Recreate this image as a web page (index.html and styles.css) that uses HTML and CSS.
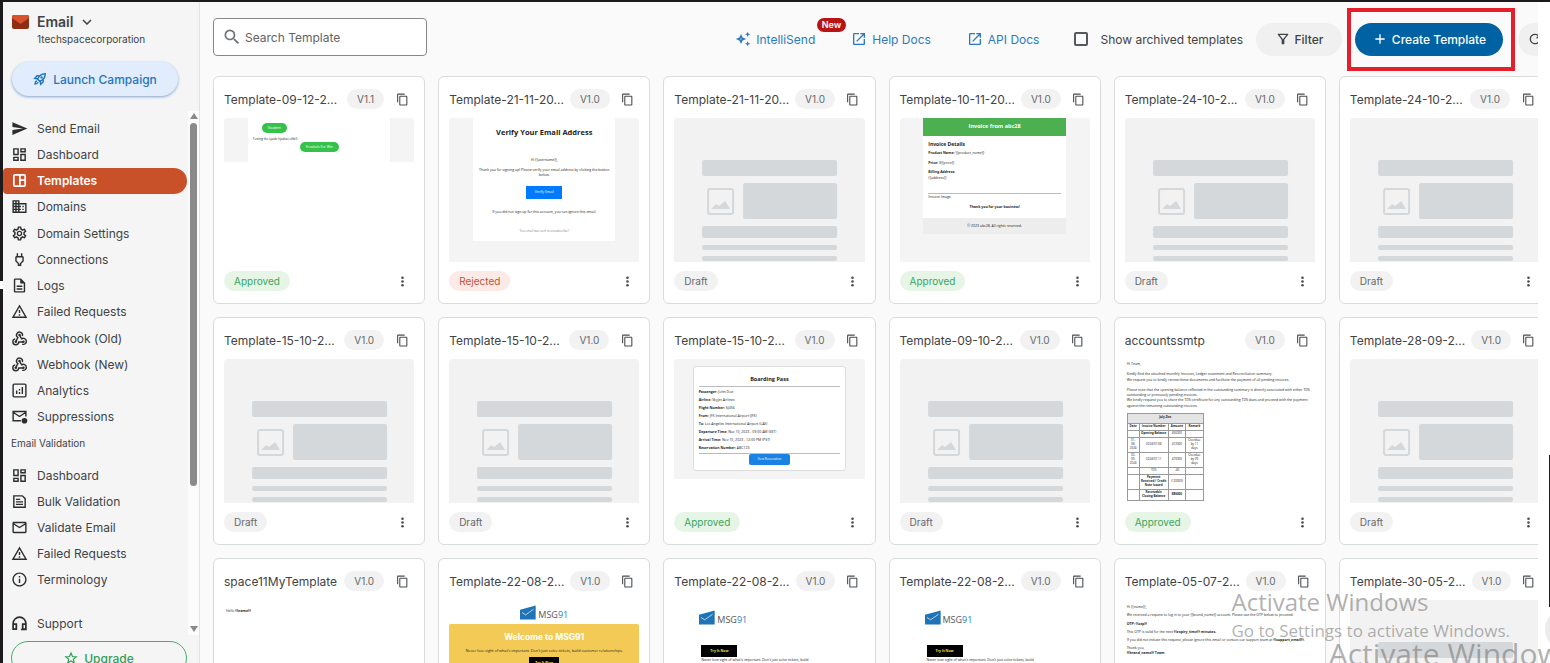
FILE: index.html
```html
<!DOCTYPE html>
<html lang="en">
<head>
    <meta charset="utf-8">
    <title>Email - Templates</title>
    <link rel="stylesheet" href="styles.css">
</head>
<body>
    <!-- icon sprite -->
    <svg class="sprite" aria-hidden="true">
        <symbol id="i-send" viewBox="0 0 24 24"><path d="M2.01 21 23 12 2.01 3 2 10l15 2-15 2z"/></symbol>
        <symbol id="i-dash" viewBox="0 0 24 24"><path d="M19 5v2h-4V5h4M9 5v6H5V5h4m10 8v6h-4v-6h4M9 17v2H5v-2h4M21 3h-8v6h8V3zM11 3H3v10h8V3zm10 8h-8v10h8V11zm-10 4H3v6h8v-6z"/></symbol>
        <symbol id="i-tpl" viewBox="0 0 24 24"><path fill="none" stroke="currentColor" stroke-width="2.4" d="M5.5 4h13A1.500 1.500 0 0 1 20 5.500v13a1.500 1.500 0 0 1-1.500 1.500h-13A1.500 1.500 0 0 1 4 18.500v-13A1.500 1.500 0 0 1 5.500 4zM12.500 4v16M12.500 11.500H20"/></symbol>
        <symbol id="i-domain" viewBox="0 0 24 24"><path d="M12 7V3H2v18h20V7H12zM6 19H4v-2h2v2zm0-4H4v-2h2v2zm0-4H4V9h2v2zm0-4H4V5h2v2zm4 12H8v-2h2v2zm0-4H8v-2h2v2zm0-4H8V9h2v2zm0-4H8V5h2v2zm10 12h-8v-2h2v-2h-2v-2h2v-2h-2V9h8v10zm-2-8h-2v2h2v-2zm0 4h-2v2h2v-2z"/></symbol>
        <symbol id="i-gear" viewBox="0 0 24 24"><path d="M19.430 12.980c.04-.32.07-.64.07-.98 0-.34-.03-.66-.07-.98l2.110-1.650c.19-.15.24-.42.12-.64l-2-3.460a.5.5 0 0 0-.61-.22l-2.490 1c-.52-.4-1.080-.73-1.690-.98l-.38-2.650A.488.488 0 0 0 14 2h-4c-.25 0-.46.18-.49.42l-.38 2.650c-.61.25-1.170.59-1.690.98l-2.490-1a.566.566 0 0 0-.18-.03c-.17 0-.34.09-.43.25l-2 3.460c-.13.22-.07.49.12.64l2.110 1.650c-.04.32-.07.65-.07.98 0 .33.03.66.07.98l-2.110 1.650c-.19.15-.24.42-.12.64l2 3.460a.5.5 0 0 0 .61.22l2.490-1c.52.4 1.080.73 1.690.98l.38 2.650c.03.24.24.42.49.42h4c.25 0 .46-.18.49-.42l.38-2.650c.61-.25 1.170-.59 1.690-.98l2.490 1c.06.02.12.03.18.03.17 0 .34-.09.43-.25l2-3.460c.12-.22.07-.49-.12-.64l-2.110-1.650zm-1.980-1.710c.04.31.05.52.05.73 0 .21-.02.43-.05.73l-.14 1.130.89.7 1.080.84-.7 1.210-1.270-.51-1.040-.42-.9.68c-.43.32-.84.56-1.250.73l-1.060.43-.16 1.130-.2 1.350h-1.400l-.19-1.350-.16-1.130-1.060-.43c-.43-.18-.83-.41-1.230-.71l-.91-.7-1.060.43-1.270.51-.7-1.210 1.080-.84.89-.7-.14-1.130c-.03-.31-.05-.54-.05-.74s.02-.43.05-.73l.14-1.130-.89-.7-1.080-.84.7-1.210 1.270.51 1.040.42.9-.68c.43-.32.84-.56 1.250-.73l1.060-.43.16-1.130.2-1.350h1.390l.19 1.350.16 1.130 1.060.43c.43.18.83.41 1.230.71l.91.7 1.060-.43 1.270-.51.7 1.210-1.070.85-.89.7.14 1.130zM12 8c-2.210 0-4 1.790-4 4s1.790 4 4 4 4-1.790 4-4-1.790-4-4-4zm0 6c-1.100 0-2-.9-2-2s.9-2 2-2 2 .9 2 2-.9 2-2 2z"/></symbol>
        <symbol id="i-plug" viewBox="0 0 24 24"><path d="M16 9v4.660l-3.500 3.510V19h-1v-1.830L8 13.650V9h8m0-6h-2v4h-4V3H8v4h-.01C6.900 6.990 6 7.890 6 8.980v5.520L9.500 18v3h5v-3l3.500-3.510V9c0-1.100-.9-2-2-2V3z"/></symbol>
        <symbol id="i-doc" viewBox="0 0 24 24"><path d="M8 16h8v2H8zm0-4h8v2H8zm6-10H6c-1.100 0-2 .9-2 2v16c0 1.100.89 2 1.990 2H18c1.100 0 2-.9 2-2V8l-6-6zm4 18H6V4h7v5h5v11z"/></symbol>
        <symbol id="i-warn" viewBox="0 0 24 24"><path d="M12 5.990 19.530 19H4.470L12 5.990M12 2 1 21h22L12 2zm1 14h-2v2h2v-2zm0-6h-2v4h2v-4z"/></symbol>
        <symbol id="i-hook" viewBox="0 0 24 24"><g fill="none" stroke="currentColor" stroke-width="2"><path d="M16 8.500a4.200 4.200 0 1 0-6.300 2.200L7 16"/><path d="M12 7.200l3 5.200a4.300 4.300 0 1 1 .8 7.600"/><path d="M6 12.500a4.200 4.200 0 1 0 5 4.500h6.500"/></g><circle cx="12" cy="7" r="1.800"/><circle cx="6.800" cy="16.500" r="1.800"/><circle cx="17.500" cy="16.500" r="1.800"/></symbol>
        <symbol id="i-chart" viewBox="0 0 24 24"><rect x="3" y="3" width="18" height="18" rx="1.500" fill="none" stroke="currentColor" stroke-width="2"/><path d="M7 12h2v5H7zM11 14h2v3h-2zM11 10h2v2h-2zM15 7h2v10h-2z"/></symbol>
        <symbol id="i-supp" viewBox="0 0 24 24"><path fill="none" stroke="currentColor" stroke-width="2" d="M21 12V5H3v13h11M3 6l9 6 9-6"/><circle cx="19" cy="18" r="4"/></symbol>
        <symbol id="i-bulk" viewBox="0 0 24 24"><path fill="none" stroke="currentColor" stroke-width="2" d="M4 4h12l4 4v12H4zM7 9h6M7 12.500h10M7 16h10"/></symbol>
        <symbol id="i-mail" viewBox="0 0 24 24"><path d="M22 6c0-1.100-.9-2-2-2H4c-1.100 0-2 .9-2 2v12c0 1.100.9 2 2 2h16c1.100 0 2-.9 2-2V6zm-2 0-8 5-8-5h16zm0 12H4V8l8 5 8-5v10z"/></symbol>
        <symbol id="i-info" viewBox="0 0 24 24"><path d="M11 7h2v2h-2zm0 4h2v6h-2zm1-9C6.480 2 2 6.480 2 12s4.480 10 10 10 10-4.480 10-10S17.520 2 12 2zm0 18c-4.410 0-8-3.590-8-8s3.590-8 8-8 8 3.590 8 8-3.590 8-8 8z"/></symbol>
        <symbol id="i-head" viewBox="0 0 24 24"><path fill="none" stroke="currentColor" stroke-width="2.400" d="M3 14v-2a9 9 0 0 1 18 0v8.500h-7M7.500 13H3v7h4.500zM21 13h-4.500v7H21"/></symbol>
        <symbol id="i-star" viewBox="0 0 24 24"><path fill="none" stroke="currentColor" stroke-width="2" d="m12 3.500 2.500 6 6.500.5-5 4.200 1.600 6.300L12 17.100l-5.600 3.400L8 14.200 3 10l6.500-.5z"/></symbol>
        <symbol id="i-rocket" viewBox="0 0 24 24"><g fill="none" stroke="currentColor" stroke-width="2.400"><path d="M8 12.500C10 7 14.500 3 21 3c0 6.500-4 11-9.500 13z"/><path d="M8.500 11.500 3 11l4-4.500h4M12.500 15.500l.5 5.500 4.500-4v-4M6.500 15c-2 1-3 3-3 5.500 2.500 0 4.500-1 5.500-3"/></g><circle cx="14.700" cy="9.300" r="2"/></symbol>
        <symbol id="i-spark" viewBox="0 0 24 24"><path fill="none" stroke="currentColor" stroke-width="2.600" d="m9 7.500 1.400 3.100 3.100 1.400-3.100 1.400L9 16.500l-1.400-3.100L4.500 12l3.100-1.400z"/><path d="m19 1 1.100 2.900L23 5l-2.900 1.100L19 9l-1.100-2.900L15 5l2.900-1.100zM19 15l1.100 2.900L23 19l-2.900 1.100L19 23l-1.100-2.900L15 19l2.900-1.100z"/></symbol>
        <symbol id="i-open" viewBox="0 0 24 24"><path d="M19 19H5V5h7V3H5c-1.110 0-2 .9-2 2v14c0 1.100.89 2 2 2h14c1.100 0 2-.9 2-2v-7h-2v7zM14 3v2h3.590l-9.830 9.830 1.410 1.410L19 6.410V10h2V3h-7z"/></symbol>
        <symbol id="i-search" viewBox="0 0 24 24"><path d="M15.500 14h-.79l-.28-.27A6.471 6.471 0 0 0 16 9.500 6.500 6.500 0 1 0 9.500 16c1.610 0 3.090-.59 4.230-1.570l.27.28v.79l5 4.990L20.490 19l-4.990-5zm-6 0C7.010 14 5 11.990 5 9.500S7.010 5 9.500 5 14 7.010 14 9.500 11.990 14 9.500 14z"/></symbol>
        <symbol id="i-filter" viewBox="0 0 24 24"><path d="M7 6h10l-5.010 6.300L7 6zm-2.750-.39C6.270 8.200 10 13 10 13v6c0 .55.45 1 1 1h2c.55 0 1-.45 1-1v-6s3.720-4.800 5.740-7.390A.998.998 0 0 0 18.950 4H5.040c-.83 0-1.300.95-.79 1.610z"/></symbol>
        <symbol id="i-plus" viewBox="0 0 24 24"><path d="M19 13h-6v6h-2v-6H5v-2h6V5h2v6h6v2z"/></symbol>
        <symbol id="i-refresh" viewBox="0 0 24 24"><path d="M17.650 6.350A7.958 7.958 0 0 0 12 4a8 8 0 1 0 7.730 10h-2.080A6 6 0 1 1 12 6c1.660 0 3.140.69 4.220 1.780L13 11h7V4l-2.350 2.350z"/></symbol>
        <symbol id="i-copy" viewBox="0 0 24 24"><path d="M16 1H4c-1.100 0-2 .9-2 2v14h2V3h12V1zm3 4H8c-1.100 0-2 .9-2 2v14c0 1.100.9 2 2 2h11c1.100 0 2-.9 2-2V7c0-1.100-.9-2-2-2zm0 16H8V7h11v14z"/></symbol>
        <symbol id="i-more" viewBox="0 0 24 24"><circle cx="12" cy="5" r="2.400"/><circle cx="12" cy="12" r="2.400"/><circle cx="12" cy="19" r="2.400"/></symbol>
        <!-- empty template -->
        <symbol id="draft" viewBox="0 0 190 144">
            <g fill="#d5d8db">
                <rect x="28" y="42" width="135" height="16" rx="2"/>
                <rect x="69" y="65" width="94" height="36" rx="2"/>
                <rect x="28" y="108" width="135" height="12" rx="2"/>
                <rect x="28" y="127" width="135" height="5" rx="2"/>
                <rect x="28" y="138" width="135" height="5" rx="2"/>
                <path d="m37 91 5-5 3 2 6-5 5 8z"/>
            </g>
            <rect x="34" y="71" width="25" height="25" rx="2" fill="none" stroke="#d5d8db" stroke-width="2"/>
        </symbol>
        <symbol id="msg" viewBox="0 0 96 84"><path fill="#1f74b8" d="M0 26 94 0v84H0z"/><path fill="none" stroke="#fff" stroke-width="4" d="m12 42 22 14 48-34"/></symbol>
    </svg>

    <div class="app">
        <aside class="sidebar">
            <div class="brand">
                <svg class="brand-logo" viewBox="0 0 17 14"><rect width="17" height="14" rx="2" fill="#8f2d12"/><path d="M0 2a2 2 0 0 1 2-2h13a2 2 0 0 1 2 2v1L8.500 9 0 3z" fill="#d9512c"/></svg>
                <div>
                    <div class="brand-name">Email <svg viewBox="0 0 10 6"><path d="m1 1 4 4 4-4" fill="none" stroke="currentColor" stroke-width="1.500"/></svg></div>
                    <div class="brand-org">1techspacecorporation</div>
                </div>
            </div>
            <button class="launch"><svg class="ic"><use href="#i-rocket"/></svg>Launch Campaign</button>
            <div class="scroll">
                <nav class="menu">
                    <ul class="nav nav-main">
                        <li><a href="#"><svg class="ic"><use href="#i-send"/></svg>Send Email</a></li>
                        <li><a href="#"><svg class="ic"><use href="#i-dash"/></svg>Dashboard</a></li>
                        <li><a href="#" class="active"><svg class="ic"><use href="#i-tpl"/></svg>Templates</a></li>
                        <li><a href="#"><svg class="ic"><use href="#i-domain"/></svg>Domains</a></li>
                        <li><a href="#"><svg class="ic"><use href="#i-gear"/></svg>Domain Settings</a></li>
                        <li><a href="#"><svg class="ic"><use href="#i-plug"/></svg>Connections</a></li>
                        <li><a href="#"><svg class="ic"><use href="#i-doc"/></svg>Logs</a></li>
                        <li><a href="#"><svg class="ic"><use href="#i-warn"/></svg>Failed Requests</a></li>
                        <li><a href="#"><svg class="ic"><use href="#i-hook"/></svg>Webhook (Old)</a></li>
                        <li><a href="#"><svg class="ic"><use href="#i-hook"/></svg>Webhook (New)</a></li>
                        <li><a href="#"><svg class="ic"><use href="#i-chart"/></svg>Analytics</a></li>
                        <li><a href="#"><svg class="ic"><use href="#i-supp"/></svg>Suppressions</a></li>
                    </ul>
                    <div class="nav-title">Email Validation</div>
                    <ul class="nav nav-val">
                        <li><a href="#"><svg class="ic"><use href="#i-dash"/></svg>Dashboard</a></li>
                        <li><a href="#"><svg class="ic"><use href="#i-bulk"/></svg>Bulk Validation</a></li>
                        <li><a href="#"><svg class="ic"><use href="#i-mail"/></svg>Validate Email</a></li>
                        <li><a href="#"><svg class="ic"><use href="#i-warn"/></svg>Failed Requests</a></li>
                        <li><a href="#"><svg class="ic"><use href="#i-info"/></svg>Terminology</a></li>
                    </ul>
                    <ul class="nav">
                        <li><a href="#"><svg class="ic"><use href="#i-head"/></svg>Support</a></li>
                    </ul>
                </nav>
                <div class="bar">
                    <svg viewBox="0 0 8 6"><path d="M4 0l4 6H0z"/></svg>
                    <div class="thumb"></div>
                    <svg viewBox="0 0 8 6"><path d="M4 6l4-6H0z"/></svg>
                </div>
            </div>
            <button class="upgrade"><svg class="ic"><use href="#i-star"/></svg>Upgrade</button>
            <span class="handle"></span>
        </aside>

        <main class="main">
            <div class="content">
                <header class="topbar">
                    <label class="search">
                        <svg><use href="#i-search"/></svg>
                        <input type="text" placeholder="Search Template" aria-label="Search Template">
                    </label>
                    <div class="links">
                        <a href="#"><svg class="ic"><use href="#i-spark"/></svg>IntelliSend<span class="new">New</span></a>
                        <a href="#"><svg class="ic"><use href="#i-open"/></svg>Help Docs</a>
                        <a href="#"><svg class="ic"><use href="#i-open"/></svg>API Docs</a>
                    </div>
                    <label class="archived" for="archived"><input type="checkbox" id="archived">Show archived templates</label>
                    <button class="btn filter"><svg class="ic"><use href="#i-filter"/></svg>Filter</button>
                    <div class="mark"><button class="btn create"><svg class="ic"><use href="#i-plus"/></svg>Create Template</button></div>
                    <button class="btn refresh" aria-label="Refresh"><svg class="ic"><use href="#i-refresh"/></svg></button>
                </header>

                <div class="grid">
                    <article class="card">
                        <div class="card-head"><h3>Template-09-12-2...</h3><span class="chip">V1.1</span><button class="icon" aria-label="Copy"><svg><use href="#i-copy"/></svg></button></div>
                        <div class="preview"><div class="mail kids"><div class="page">
                            <p><span class="pill">Student</span></p>
                            <p class="line">Testing the ojaidv hjadvac ofdc5</p>
                            <p class="second"><span class="pill">Kruskals For Win</span></p>
                        </div></div></div>
                        <div class="card-foot"><span class="chip ok">Approved</span><button class="icon" aria-label="More"><svg><use href="#i-more"/></svg></button></div>
                    </article>
                    <article class="card">
                        <div class="card-head"><h3>Template-21-11-20...</h3><span class="chip">V1.0</span><button class="icon" aria-label="Copy"><svg><use href="#i-copy"/></svg></button></div>
                        <div class="preview"><div class="mail verify"><div class="page">
                            <h4>Verify Your Email Address</h4>
                            <p>Hi {{username}},</p>
                            <p>Thank you for signing up! Please verify your email address by clicking the button below.</p>
                            <span class="cta">Verify Email</span>
                            <p>If you did not sign up for this account, you can ignore this email.</p>
                            <small>You email was sent to unsubscribe?</small>
                        </div></div></div>
                        <div class="card-foot"><span class="chip bad">Rejected</span><button class="icon" aria-label="More"><svg><use href="#i-more"/></svg></button></div>
                    </article>
                    <article class="card">
                        <div class="card-head"><h3>Template-21-11-20...</h3><span class="chip">V1.0</span><button class="icon" aria-label="Copy"><svg><use href="#i-copy"/></svg></button></div>
                        <div class="preview"><svg class="empty"><use href="#draft"/></svg></div>
                        <div class="card-foot"><span class="chip">Draft</span><button class="icon" aria-label="More"><svg><use href="#i-more"/></svg></button></div>
                    </article>
                    <article class="card">
                        <div class="card-head"><h3>Template-10-11-20...</h3><span class="chip">V1.0</span><button class="icon" aria-label="Copy"><svg><use href="#i-copy"/></svg></button></div>
                        <div class="preview"><div class="mail invoice"><div class="page">
                            <h4>Invoice from abc28</h4>
                            <div class="body">
                                <h5>Invoice Details</h5>
                                <p><b>Product Name:</b> {{product_name}}</p>
                                <p><b>Price:</b> ${{price}}</p>
                                <p><b>Billing Address:</b><br>{{address}}</p>
                                <hr>
                                <div class="img">Invoice Image</div>
                                <div class="thanks">Thank you for your business!</div>
                            </div>
                            <div class="copy">© 2023 abc28. All rights reserved.</div>
                        </div></div></div>
                        <div class="card-foot"><span class="chip ok">Approved</span><button class="icon" aria-label="More"><svg><use href="#i-more"/></svg></button></div>
                    </article>
                    <article class="card">
                        <div class="card-head"><h3>Template-24-10-2...</h3><span class="chip">V1.0</span><button class="icon" aria-label="Copy"><svg><use href="#i-copy"/></svg></button></div>
                        <div class="preview"><svg class="empty"><use href="#draft"/></svg></div>
                        <div class="card-foot"><span class="chip">Draft</span><button class="icon" aria-label="More"><svg><use href="#i-more"/></svg></button></div>
                    </article>
                    <article class="card">
                        <div class="card-head"><h3>Template-24-10-2...</h3><span class="chip">V1.0</span><button class="icon" aria-label="Copy"><svg><use href="#i-copy"/></svg></button></div>
                        <div class="preview"><svg class="empty"><use href="#draft"/></svg></div>
                        <div class="card-foot"><span class="chip">Draft</span><button class="icon" aria-label="More"><svg><use href="#i-more"/></svg></button></div>
                    </article>

                    <article class="card">
                        <div class="card-head"><h3>Template-15-10-2...</h3><span class="chip">V1.0</span><button class="icon" aria-label="Copy"><svg><use href="#i-copy"/></svg></button></div>
                        <div class="preview"><svg class="empty"><use href="#draft"/></svg></div>
                        <div class="card-foot"><span class="chip">Draft</span><button class="icon" aria-label="More"><svg><use href="#i-more"/></svg></button></div>
                    </article>
                    <article class="card">
                        <div class="card-head"><h3>Template-15-10-2...</h3><span class="chip">V1.0</span><button class="icon" aria-label="Copy"><svg><use href="#i-copy"/></svg></button></div>
                        <div class="preview"><svg class="empty"><use href="#draft"/></svg></div>
                        <div class="card-foot"><span class="chip">Draft</span><button class="icon" aria-label="More"><svg><use href="#i-more"/></svg></button></div>
                    </article>
                    <article class="card">
                        <div class="card-head"><h3>Template-15-10-2...</h3><span class="chip">V1.0</span><button class="icon" aria-label="Copy"><svg><use href="#i-copy"/></svg></button></div>
                        <div class="preview"><div class="mail boarding"><div class="page">
                            <h4>Boarding Pass</h4>
                            <div class="rows">
                                <p><b>Passenger:</b> John Doe</p>
                                <p><b>Airline:</b> Skyjet Airlines</p>
                                <p><b>Flight Number:</b> SJ456</p>
                                <p><b>From:</b> JFK International Airport (JFK)</p>
                                <p><b>To:</b> Los Angeles International Airport (LAX)</p>
                                <p><b>Departure Time:</b> Nov 10, 2023 - 09:00 AM (EST)</p>
                                <p><b>Arrival Time:</b> Nov 10, 2023 - 12:00 PM (PST)</p>
                                <p><b>Reservation Number:</b> ABC123</p>
                            </div>
                            <span class="cta">View Reservation</span>
                        </div></div></div>
                        <div class="card-foot"><span class="chip ok">Approved</span><button class="icon" aria-label="More"><svg><use href="#i-more"/></svg></button></div>
                    </article>
                    <article class="card">
                        <div class="card-head"><h3>Template-09-10-2...</h3><span class="chip">V1.0</span><button class="icon" aria-label="Copy"><svg><use href="#i-copy"/></svg></button></div>
                        <div class="preview"><svg class="empty"><use href="#draft"/></svg></div>
                        <div class="card-foot"><span class="chip">Draft</span><button class="icon" aria-label="More"><svg><use href="#i-more"/></svg></button></div>
                    </article>
                    <article class="card">
                        <div class="card-head"><h3>accountssmtp</h3><span class="chip">V1.0</span><button class="icon" aria-label="Copy"><svg><use href="#i-copy"/></svg></button></div>
                        <div class="preview"><div class="mail account">
                            <p>Hi Team,</p>
                            <p>Kindly find the attached monthly Invoices, Ledger statement and Reconciliation summary.<br>We request you to kindly review these documents and facilitate the payment of all pending invoices.</p>
                            <p>Please note that the opening balance reflected in the outstanding summary is directly associated with either TDS outstanding or previously pending invoices.<br>We kindly request you to share the TDS certificate for any outstanding TDS dues and proceed with the payment against the remaining outstanding invoices.</p>
                            <table>
                                <colgroup><col class="c1"><col class="c2"><col class="c3"><col class="c3"></colgroup>
                                <tr class="h40 shade"><th colspan="4">July-Dec</th></tr>
                                <tr class="h28"><th>Date</th><th>Invoice Number</th><th>Amount</th><th>Remark</th></tr>
                                <tr class="h28"><td></td><th>Opening Balance</th><td>456000</td><td></td></tr>
                                <tr class="h60"><td>01-<br>08-<br>2024</td><td>2024/07-08</td><td>472000</td><td>Overdue<br>by 11<br>days</td></tr>
                                <tr class="h60"><td>02-<br>09-<br>2024</td><td>2024/07-11</td><td>470000</td><td>Overdue<br>by 09<br>days</td></tr>
                                <tr class="h28"><td></td><td>TDS</td><td>-40</td><td></td></tr>
                                <tr class="h60"><td></td><th>Payment<br>Received / Credit<br>Note Issued</th><td>(120000)</td><td></td></tr>
                                <tr class="h44"><td></td><th>Receivable<br>Closing Balance</th><th>880000</th><td></td></tr>
                            </table>
                        </div></div>
                        <div class="card-foot"><span class="chip ok">Approved</span><button class="icon" aria-label="More"><svg><use href="#i-more"/></svg></button></div>
                    </article>
                    <article class="card">
                        <div class="card-head"><h3>Template-28-09-2...</h3><span class="chip">V1.0</span><button class="icon" aria-label="Copy"><svg><use href="#i-copy"/></svg></button></div>
                        <div class="preview"><svg class="empty"><use href="#draft"/></svg></div>
                        <div class="card-foot"><span class="chip">Draft</span><button class="icon" aria-label="More"><svg><use href="#i-more"/></svg></button></div>
                    </article>

                    <article class="card">
                        <div class="card-head"><h3>space11MyTemplate</h3><span class="chip">V1.0</span><button class="icon" aria-label="Copy"><svg><use href="#i-copy"/></svg></button></div>
                        <div class="preview"><div class="mail hello"><p>Hello <b>{{name}}</b></p></div></div>
                    </article>
                    <article class="card">
                        <div class="card-head"><h3>Template-22-08-2...</h3><span class="chip">V1.0</span><button class="icon" aria-label="Copy"><svg><use href="#i-copy"/></svg></button></div>
                        <div class="preview"><div class="mail welcome">
                            <div class="msg"><svg><use href="#msg"/></svg><span>MSG<i>91</i></span></div>
                            <div class="hero">
                                <h4>Welcome to MSG91</h4>
                                <p>Never lose sight of what's important. Don't just solve tickets, build customer relationships.</p>
                                <span class="try">Try It Now</span>
                            </div>
                        </div></div>
                    </article>
                    <article class="card">
                        <div class="card-head"><h3>Template-22-08-2...</h3><span class="chip">V1.0</span><button class="icon" aria-label="Copy"><svg><use href="#i-copy"/></svg></button></div>
                        <div class="preview"><div class="mail plain">
                            <div class="msg"><svg><use href="#msg"/></svg><span>MSG<i>91</i></span></div>
                            <span class="try">Try It Now</span>
                            <p>Never lose sight of what's important. Don't just solve tickets, build</p>
                        </div></div>
                    </article>
                    <article class="card">
                        <div class="card-head"><h3>Template-22-08-2...</h3><span class="chip">V1.0</span><button class="icon" aria-label="Copy"><svg><use href="#i-copy"/></svg></button></div>
                        <div class="preview"><div class="mail plain">
                            <div class="msg"><svg><use href="#msg"/></svg><span>MSG<i>91</i></span></div>
                            <span class="try">Try It Now</span>
                            <p>Never lose sight of what's important. Don't just solve tickets, build</p>
                        </div></div>
                    </article>
                    <article class="card">
                        <div class="card-head"><h3>Template-05-07-2...</h3><span class="chip">V1.0</span><button class="icon" aria-label="Copy"><svg><use href="#i-copy"/></svg></button></div>
                        <div class="preview"><div class="mail otp">
                            <p>Hi {{name}},</p>
                            <p>We received a request to log in to your {{brand_name}} account. Please use the OTP below to proceed:</p>
                            <p><b>OTP: {{otp}}</b></p>
                            <p>This OTP is valid for the next <b>{{expiry_time}} minutes.</b></p>
                            <p>If you did not initiate this request, please ignore this email or contact our support team at <b>{{support_email}}.</b></p>
                            <p>Thank you,<br><b>{{brand_name}} Team</b></p>
                        </div></div>
                    </article>
                    <article class="card">
                        <div class="card-head"><h3>Template-30-05-2...</h3><span class="chip">V1.0</span><button class="icon" aria-label="Copy"><svg><use href="#i-copy"/></svg></button></div>
                        <div class="preview"><svg class="empty"><use href="#draft"/></svg></div>
                    </article>
                </div>
            </div>
        </main>
        <div class="edge"><span class="edge-line"></span><span class="edge-dot"></span></div>
    </div>

    <div class="watermark">
        <div class="wm-title">Activate Windows</div>
        <div class="wm-text">Go to Settings to activate Windows.</div>
    </div>
    <div class="watermark wm-big">Activate Windows</div>
</body>
</html>
```
FILE: styles.css
```css
*{
    box-sizing:border-box;
}
body{
    margin:0;
    height:100vh;
    overflow:hidden;
    position:relative;
    font-family:Inter,"Liberation Sans",sans-serif;
    font-size:12px;
    color:#3f4346;
    background:#fff;
}
h3,h4,h5,p,ul{
    margin:0;
    padding:0;
}
button,input{
    font-family:inherit;
    font-size:inherit;
    color:inherit;
}
button{
    border:0;
    padding:0;
    background:none;
}
a{
    color:inherit;
    text-decoration:none;
}
svg{
    fill:currentColor;
    flex:none;
}
.sprite{
    position:absolute;
    width:0;
    height:0;
}
.ic{
    width:17px;
    height:17px;
}
.app{
    display:flex;
    height:100%;
    border-top:2px solid #1c1a1d;
    overflow:hidden;
}

/* sidebar */
.sidebar{
    position:relative;
    flex:none;
    width:200px;
    border-left:3px solid #1c1a1d;
    border-right:1px solid #e2e2e2;
    background:#f5f5f5;
}
.brand{
    display:flex;
    gap:8px;
    padding:11px 0 0 9px;
}
.brand-logo{
    width:17px;
    height:14px;
    margin-top:2px;
}
.brand-name{
    font-size:14px;
    line-height:18px;
    font-weight:600;
}
.brand-name svg{
    width:10px;
    height:6px;
    margin:0 0 2px 5px;
}
.brand-org{
    font-size:10px;
    line-height:16px;
}
.launch{
    display:flex;
    align-items:center;
    justify-content:center;
    gap:6px;
    width:166px;
    height:34px;
    margin:15px 0 0 9px;
    border-radius:17px;
    background:#e1edfc;
    box-shadow:0 1px 3px #7fa3d0;
    color:#1f75c0;
    font-weight:500;
}
.launch .ic{
    width:14px;
    height:14px;
}
.scroll{
    display:flex;
    justify-content:space-between;
    height:524px;
    margin-top:15px;
}
.menu{
    width:184px;
    padding-top:4px;
}
.nav{
    display:grid;
    grid-auto-rows:1fr;
    list-style:none;
}
.nav-main{
    height:315px;
}
.nav-val{
    height:131px;
    margin-bottom:17px;
}
.nav a{
    display:flex;
    align-items:center;
    gap:9px;
    height:100%;
    min-height:26px;
    padding-left:8px;
    border-radius:4px 13px 13px 4px;
}
.nav .ic{
    color:#2b2d2f;
}
.nav .active{
    background:#c8512a;
    color:#fff;
    font-weight:600;
}
.nav .active .ic{
    color:#fff;
}
.nav-title{
    margin-bottom:6px;
    padding-left:8px;
    font-size:10px;
    line-height:26px;
}
.bar{
    display:flex;
    flex-direction:column;
    align-items:center;
    justify-content:space-between;
    width:11px;
    padding:2px 0 3px;
    background:#fcfcfc;
    color:#8a8a8a;
}
.bar svg{
    width:8px;
    height:6px;
}
.thumb{
    width:7px;
    height:363px;
    margin:4px 0 auto;
    border-radius:4px;
    background:#8a8a8a;
}
.upgrade{
    display:flex;
    align-items:center;
    justify-content:center;
    gap:6px;
    width:176px;
    height:34px;
    margin:6px 0 0 8px;
    border:1px solid #45ad6c;
    border-radius:17px;
    color:#2e9e58;
    font-weight:500;
}
.upgrade .ic{
    width:14px;
    height:14px;
}
.handle{
    position:absolute;
    left:-3px;
    top:279px;
    width:3px;
    height:8px;
    background:#fff;
}

/* main area */
.main{
    flex:1;
    min-width:0;
    padding-left:13px;
    overflow:hidden;
    background:#fafafa;
}
.content{
    margin-right:-13px;
}
.topbar{
    display:flex;
    align-items:center;
    height:74px;
}
.search{
    display:flex;
    align-items:center;
    gap:1px;
    width:214px;
    height:38px;
    margin-bottom:4px;
    padding-left:8px;
    border:1px solid #85898c;
    border-radius:4px;
    background:#fff;
}
.search svg{
    width:20px;
    height:20px;
    color:#6e7275;
}
.search input{
    width:170px;
    border:0;
    outline:0;
    background:none;
}
.search input::placeholder{
    color:#5f6366;
}
.links{
    display:flex;
    gap:36px;
    margin-left:auto;
    color:#2b7ac0;
}
.links a{
    display:flex;
    align-items:center;
    gap:5px;
    position:relative;
}
.links .ic,.btn .ic{
    width:16px;
    height:16px;
}
.new{
    position:absolute;
    right:-31px;
    top:-13px;
    padding:0 5px;
    border-radius:7px;
    background:#b81414;
    color:#fff;
    font-size:9px;
    line-height:14px;
    font-weight:600;
}
.archived{
    display:flex;
    align-items:center;
    gap:12px;
    margin:0 13px 0 35px;
}
.archived input{
    appearance:none;
    width:14px;
    height:14px;
    margin:0;
    border:2px solid #56595c;
    border-radius:2px;
}
.btn{
    display:flex;
    align-items:center;
    justify-content:center;
    gap:4px;
    height:33px;
    border-radius:17px;
    font-weight:500;
}
.filter{
    width:86px;
    background:#f0f0f0;
}
.mark{
    position:relative;
    margin:0 15px 0 13px;
}
.mark::after{
    content:"";
    position:absolute;
    inset:-15px -12px -15px -8px;
    border:4px solid #e5202b;
}
.create{
    width:148px;
    background:#0062a3;
    color:#fff;
}
.refresh{
    width:33px;
    background:#f0f0f0;
}
.edge{
    position:relative;
    flex:none;
    width:12px;
}
.edge-line{
    position:absolute;
    right:0;
    top:453px;
    width:1px;
    height:152px;
    background:#222;
}
.edge-dot{
    position:absolute;
    left:7px;
    top:608px;
    width:34px;
    height:38px;
    border-radius:50%;
    background:#ececec;
}

/* cards */
.grid{
    display:grid;
    grid-template-columns:repeat(6,minmax(200px,1fr));
    gap:13px;
}
.card{
    height:228px;
    padding:0 10px;
    border:1px solid #d9dcdc;
    border-radius:6px;
    background:#fff;
}
.card-head{
    display:flex;
    align-items:center;
    gap:6px;
    height:41px;
    padding-top:3px;
}
.card-head h3{
    flex:1;
    font-size:12px;
    font-weight:400;
    white-space:nowrap;
}
.chip{
    padding:0 10px;
    border-radius:10px;
    background:#f2f2f2;
    color:#65696c;
    font-size:10px;
    line-height:20px;
}
.ok{
    background:#e6f5e6;
    color:#3ba55d;
}
.bad{
    background:#fbeae6;
    color:#c9503a;
}
.icon{
    display:flex;
    align-items:center;
    justify-content:center;
    width:24px;
    height:24px;
}
.icon svg{
    width:13px;
    height:13px;
    color:#4a4d50;
}
.card-foot{
    display:flex;
    align-items:center;
    justify-content:space-between;
    height:38px;
}
.preview{
    height:144px;
    border-radius:4px 4px 0 0;
    overflow:hidden;
}
.empty{
    display:block;
    width:100%;
    height:144px;
    background:#f2f2f2;
}

/* mails are laid out at full size and shown at a quarter */
.mail{
    zoom:0.25;
    font-family:"Open Sans","Noto Sans",sans-serif;
    font-size:14px;
    line-height:20px;
    color:#222;
}
.page{
    width:570px;
    margin:0 auto;
    background:#fff;
}
.kids{
    background:#f4f4f4;
}
.kids .page{
    height:176px;
    padding:18px 20px;
}
.pill{
    display:inline-block;
    margin-left:36px;
    padding:0 24px;
    border-radius:21px;
    background:#34c24b;
    color:#fff;
    line-height:42px;
}
.kids .line{
    margin-top:14px;
    font-size:12px;
}
.kids .second .pill{
    margin-left:188px;
}
.verify{
    height:576px;
    background:#f4f4f4;
    text-align:center;
}
.verify .page{
    height:492px;
    padding:36px 16px 0;
}
.verify h4{
    margin-bottom:76px;
    font-size:30px;
    line-height:44px;
}
.verify p{
    margin-bottom:18px;
}
.verify .cta{
    display:inline-block;
    width:144px;
    margin:20px 0 42px;
    background:#007bff;
    color:#fff;
    line-height:50px;
}
.verify small{
    display:block;
    margin-top:60px;
    font-size:12px;
    color:#888;
}
.invoice{
    height:576px;
    background:#f4f4f4;
}
.invoice h4{
    background:#4caf50;
    color:#fff;
    font-size:22px;
    line-height:70px;
    text-align:center;
}
.invoice .body{
    padding:20px 20px 0;
}
.invoice h5{
    margin-bottom:10px;
    font-size:20px;
    line-height:28px;
}
.invoice p{
    margin-bottom:16px;
    line-height:22px;
}
.invoice hr{
    margin:50px 0 0;
    border:0;
    border-top:1px solid #bbb;
}
.thanks{
    margin-top:20px;
    padding-bottom:38px;
    text-align:center;
    font-weight:700;
}
.copy{
    background:#ededed;
    line-height:62px;
    text-align:center;
}
.boarding{
    padding-top:26px;
    height:478px;
    background:#f4f4f4;
}
.boarding .page{
    width:614px;
    height:420px;
    padding:28px 20px 0;
    border:1px solid #ddd;
    border-radius:12px;
    text-align:center;
}
.boarding h4{
    font-size:22px;
    line-height:40px;
    padding-bottom:8px;
}
.rows{
    padding:6px 0 4px;
    border-top:1px solid #bbb;
    border-bottom:1px solid #bbb;
    text-align:left;
}
.rows p{
    line-height:32px;
}
.boarding .cta{
    display:inline-block;
    width:164px;
    border-radius:8px;
    background:#1a82e2;
    color:#fff;
    font-size:12px;
    line-height:42px;
}
.account{
    padding:8px;
}
.account p{
    margin-bottom:20px;
    line-height:21px;
}
.account table{
    width:304px;
    table-layout:fixed;
    border-collapse:collapse;
    font-size:12px;
    line-height:15px;
    text-align:center;
}
.account th,.account td{
    padding:0;
    border:1px solid #999;
}
.c1{
    width:48px;
}
.c2{
    width:116px;
}
.c3{
    width:70px;
}
.shade{
    background:#e4e4e4;
}
.h28{
    height:28px;
}
.h40{
    height:40px;
}
.h44{
    height:44px;
}
.h60{
    height:60px;
}
.hello{
    padding:30px 8px;
}
.msg{
    display:flex;
    align-items:flex-end;
    gap:8px;
    font-family:"Open Sans",sans-serif;
    font-size:36px;
    line-height:34px;
    color:#555;
}
.msg svg{
    width:64px;
    height:60px;
}
.msg i{
    color:#2b7ac0;
    font-style:normal;
}
.try{
    display:inline-block;
    padding:0 36px;
    background:#000;
    color:#f0e04c;
    font-weight:700;
    line-height:48px;
}
.welcome{
    padding-top:18px;
    text-align:center;
}
.welcome .msg{
    justify-content:center;
}
.hero{
    margin-top:18px;
    height:500px;
    padding-top:32px;
    border-radius:8px 8px 0 0;
    background:#f2ca55;
}
.hero h4{
    font-family:Inter,sans-serif;
    font-size:34px;
    line-height:40px;
    color:#fff;
}
.hero p{
    margin:22px 0 16px;
    font-size:15px;
}
.hero .try{
    padding:0 24px;
}
.plain{
    padding:38px 100px;
}
.plain .try{
    margin:80px 0 0 8px;
}
.plain p{
    margin-left:8px;
    white-space:nowrap;
}
.otp{
    padding:16px 8px;
}
.otp p{
    margin-bottom:13px;
}

/* system watermark over the page */
.watermark{
    position:absolute;
    right:40px;
    bottom:20px;
    font-family:"Open Sans",sans-serif;
    color:rgba(110,110,110,.55);
    white-space:nowrap;
    pointer-events:none;
}
.wm-title{
    font-size:24px;
    line-height:34px;
}
.wm-text{
    font-size:17px;
    line-height:24px;
}
.wm-big{
    right:-25px;
    bottom:-9px;
    font-size:30px;
    line-height:36px;
}
```
